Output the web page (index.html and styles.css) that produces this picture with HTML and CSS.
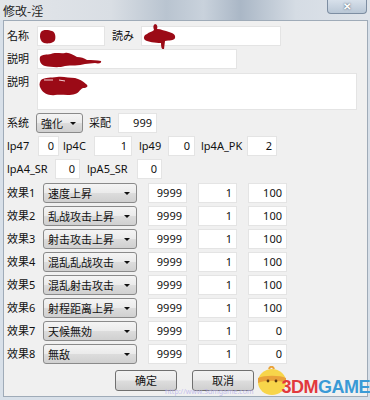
FILE: index.html
```html
<!DOCTYPE html>
<html lang="ja">
    <head>
        <title>修改-淫</title>
        <meta charset="utf-8">
        <link rel="stylesheet" href="styles.css">
    </head>
    <body>
        <div class="window">
            <div class="titlebar">
                <span class="title">修改-淫</span>
                <div class="close">✕</div>
            </div>
            <div class="client">
                <!-- name / reading -->
                <div class="row">
                    <span class="lbl w30">名称</span>
                    <div class="field w68">
                        <svg class="blot" width="18" height="15" viewBox="0 0 18 15"><path d="M2 3 C4 0 10 1 13 2 C16 3 17 7 16 11 C15 14 9 15 5 14 C1 13 0 6 2 3 Z" fill="#9b0a16"/></svg>
                    </div>
                    <span class="lbl gap7 w29">読み</span>
                    <div class="field w140">
                        <svg class="blot blot-yomi" width="34" height="26" viewBox="0 0 34 26"><path d="M12 0 C14 0 15 3 14 5 C18 5 22 7 26 8 C30 9 33 11 32 14 C31 17 26 16 22 17 L21 25 C19 26 18 24 18 19 C12 19 5 18 2 16 C0 14 1 11 4 10 C6 8 9 8 11 6 C10 3 10 1 12 0 Z" fill="#9b0a16"/></svg>
                    </div>
                </div>
                <div class="row">
                    <span class="lbl w30">説明</span>
                    <div class="field w200">
                        <svg class="blot" width="64" height="16" viewBox="0 0 64 16"><path d="M1 5 C3 2 8 3 12 2 C16 0 22 2 26 1 C30 0 34 3 38 5 C42 5 45 6 48 8 C53 8 58 8 62 9 C63 11 60 12 56 11 L46 12 C40 14 32 13 26 14 C20 16 12 15 6 14 C2 13 0 9 1 5 Z" fill="#9b0a16"/></svg>
                    </div>
                </div>
                <div class="row row-tall">
                    <span class="lbl lbl-top w30">説明</span>
                    <div class="field area">
                        <svg class="blot" width="52" height="20" viewBox="0 0 52 20"><path d="M2 4 C6 1 12 2 18 1 C24 0 30 2 36 2 C40 3 44 5 47 8 C50 10 48 12 44 12 C40 14 40 17 36 18 C30 20 22 18 16 19 C10 20 4 17 2 13 C0 10 0 7 2 4 Z" fill="#9b0a16"/><path d="M5 4 L14 4 M20 4 L26 5" stroke="#f3d0d4" stroke-width="1"/></svg>
                    </div>
                </div>
                <!-- system / command -->
                <div class="row">
                    <span class="lbl w29">系统</span>
                    <div class="select w47">強化</div>
                    <span class="lbl gap6 w29">采配</span>
                    <div class="field num w39">999</div>
                </div>
                <div class="row">
                    <span class="lbl w31">lp47</span>
                    <div class="field num w21">0</div>
                    <span class="lbl gap4 w31">lp4C</span>
                    <div class="field num w38">1</div>
                    <span class="lbl gap7 w29">lp49</span>
                    <div class="field num w27">0</div>
                    <span class="lbl gap6 w46">lp4A_PK</span>
                    <div class="field num w30">2</div>
                </div>
                <div class="row">
                    <span class="lbl w48">lpA4_SR</span>
                    <div class="field num w25">0</div>
                    <span class="lbl gap7 w50">lpA5_SR</span>
                    <div class="field num w25">0</div>
                </div>
                <!-- effects -->
                <div class="effects">
                    <div class="row">
                        <span class="lbl w36">效果1</span>
                        <div class="select w94">速度上昇</div>
                        <div class="field num eff">9999</div>
                        <div class="field num eff">1</div>
                        <div class="field num eff">100</div>
                    </div>
                    <div class="row">
                        <span class="lbl w36">效果2</span>
                        <div class="select w94">乱战攻击上昇</div>
                        <div class="field num eff">9999</div>
                        <div class="field num eff">1</div>
                        <div class="field num eff">100</div>
                    </div>
                    <div class="row">
                        <span class="lbl w36">效果3</span>
                        <div class="select w94">射击攻击上昇</div>
                        <div class="field num eff">9999</div>
                        <div class="field num eff">1</div>
                        <div class="field num eff">100</div>
                    </div>
                    <div class="row">
                        <span class="lbl w36">效果4</span>
                        <div class="select w94">混乱乱战攻击</div>
                        <div class="field num eff">9999</div>
                        <div class="field num eff">1</div>
                        <div class="field num eff">100</div>
                    </div>
                    <div class="row">
                        <span class="lbl w36">效果5</span>
                        <div class="select w94">混乱射击攻击</div>
                        <div class="field num eff">9999</div>
                        <div class="field num eff">1</div>
                        <div class="field num eff">100</div>
                    </div>
                    <div class="row">
                        <span class="lbl w36">效果6</span>
                        <div class="select w94">射程距离上昇</div>
                        <div class="field num eff">9999</div>
                        <div class="field num eff">1</div>
                        <div class="field num eff">100</div>
                    </div>
                    <div class="row">
                        <span class="lbl w36">效果7</span>
                        <div class="select w94">天候無効</div>
                        <div class="field num eff">9999</div>
                        <div class="field num eff">1</div>
                        <div class="field num eff">0</div>
                    </div>
                    <div class="row">
                        <span class="lbl w36">效果8</span>
                        <div class="select w94">無敌</div>
                        <div class="field num eff">9999</div>
                        <div class="field num eff">1</div>
                        <div class="field num eff">0</div>
                    </div>
                </div>
                <div class="buttons">
                    <div class="btn"><span>确定</span></div>
                    <div class="btn"><span>取消</span></div>
                </div>
                <!-- site watermark -->
                <div class="watermark">
                    <span class="wm-url">http://www.3dmgame.com</span>
                    <svg class="chick" width="32" height="30" viewBox="0 0 32 30">
                        <ellipse cx="16" cy="16" rx="14" ry="13" fill="#f7d54a"/>
                        <path d="M2 12 C8 9 24 9 30 12 L30 17 C24 14 8 14 2 17 Z" fill="#e9a23a"/>
                        <circle cx="12" cy="15" r="1.4" fill="#5a3a10"/>
                        <circle cx="20" cy="15" r="1.4" fill="#5a3a10"/>
                        <path d="M13 3 C14 0 17 0 18 3" stroke="#e9a23a" stroke-width="2" fill="none"/>
                    </svg>
                    <span class="wm-logo"><span class="wm-red">3DM</span><span class="wm-blue">GAME</span></span>
                </div>
            </div>
        </div>
    </body>
</html>
```
FILE: styles.css
```css
html, body {
    margin: 0;
    padding: 0;
    background-color: #d8e0e9;
}

.window {
    width: 370px;
    height: 400px;
    background: #d8e0e9;
    font-family: "Noto Sans", "Noto Sans CJK SC", sans-serif;
    font-size: 11px;
    color: #111;
    overflow: hidden;
}

.titlebar {
    position: relative;
    height: 20px;
    background: linear-gradient(to right, #e3e6ea 0%, #d9dee4 30%, #b9c4d0 45%, #c9d2dc 55%, #aab7c6 65%, #d5dce4 80%, #dfe4ea 100%);
}

.title {
    display: inline-block;
    padding: 2px 0 0 3px;
    font-family: "Noto Sans CJK SC", sans-serif;
    font-size: 12px;
    color: #222;
}

.close {
    position: absolute;
    top: 0;
    right: 3px;
    width: 38px;
    height: 13px;
    border: 1px solid #7d8ea2;
    border-top: none;
    border-radius: 0 0 4px 4px;
    background: linear-gradient(#d7e0ea, #b9c7d6);
    color: #fff;
    font-size: 10px;
    font-weight: bold;
    line-height: 12px;
    text-align: center;
    text-shadow: 0 0 2px #3c4a5a;
}

.client {
    position: relative;
    margin: 0 2px 0 3px;
    height: 370px;
    padding: 5px 0 0 3px;
    border: 1px solid #9fabb8;
    background: #f0f0f0;
    display: flex;
    flex-direction: column;
    gap: 3px;
}

.row {
    display: flex;
    align-items: center;
    height: 20px;
}

.row-tall {
    height: 37px;
    align-items: flex-start;
    margin-top: 1px;
}

.lbl {
    flex: none;
    white-space: nowrap;
    line-height: 20px;
}

.lbl-top {
    line-height: 18px;
}

.field {
    position: relative;
    flex: none;
    box-sizing: border-box;
    height: 20px;
    background: #fff;
    border: 1px solid #e4e4e4;
    line-height: 18px;
    overflow: visible;
}

.num {
    text-align: right;
    padding-right: 4px;
}

.area {
    width: 320px;
    height: 37px;
}

.blot {
    position: absolute;
    left: 1px;
    top: 2px;
}

.blot-yomi {
    top: -3px;
}

.select {
    position: relative;
    flex: none;
    box-sizing: border-box;
    height: 20px;
    padding-left: 4px;
    border: 1px solid #8a8a8a;
    border-radius: 3px;
    background: linear-gradient(#f4f4f4 0%, #ebebeb 48%, #dcdcdc 52%, #d0d0d0 100%);
    font-family: "Noto Sans CJK SC", sans-serif;
    line-height: 18px;
}

.select::after {
    content: "";
    position: absolute;
    right: 6px;
    top: 8px;
    border-left: 3px solid transparent;
    border-right: 3px solid transparent;
    border-top: 3px solid #111;
}

.effects {
    display: flex;
    flex-direction: column;
    gap: 3px;
    margin-top: 1px;
}

.eff {
    width: 39px;
    margin-left: 11px;
}

.buttons {
    display: flex;
    gap: 15px;
    margin: 3px 0 0 108px;
}

.btn {
    box-sizing: border-box;
    display: flex;
    align-items: center;
    justify-content: center;
    width: 62px;
    height: 21px;
    border: 1px solid #707070;
    border-radius: 3px;
    background: linear-gradient(#f2f2f2 0%, #ebebeb 48%, #dddddd 52%, #cfcfcf 100%);
    font-family: "Noto Sans CJK SC", sans-serif;
    line-height: 13px;
}

.watermark {
    position: absolute;
    right: -3px;
    bottom: 0;
    display: flex;
    align-items: flex-end;
}

.wm-url {
    margin-right: 3px;
    margin-bottom: 1px;
    font-size: 7px;
    line-height: 7px;
    color: #b9b3ec;
    opacity: 0.8;
}

.chick {
    margin-right: -7px;
}

.wm-logo {
    margin-bottom: 1px;
    font-family: "Liberation Sans", sans-serif;
    font-size: 18px;
    font-weight: bold;
    line-height: 16px;
    letter-spacing: -0.5px;
}

.wm-red {
    color: #e2393c;
}

.wm-blue {
    color: #3a9ad6;
}

.w21 { width: 21px; }
.w25 { width: 25px; }
.w27 { width: 27px; }
.w29 { width: 29px; }
.w30 { width: 30px; }
.w31 { width: 31px; }
.w36 { width: 36px; }
.w38 { width: 38px; }
.w39 { width: 39px; }
.w46 { width: 46px; }
.w47 { width: 47px; }
.w48 { width: 48px; }
.w50 { width: 50px; }
.w68 { width: 68px; }
.w94 { width: 94px; }
.w140 { width: 140px; }
.w200 { width: 200px; }

.gap4 { margin-left: 4px; }
.gap6 { margin-left: 6px; }
.gap7 { margin-left: 7px; }
```
